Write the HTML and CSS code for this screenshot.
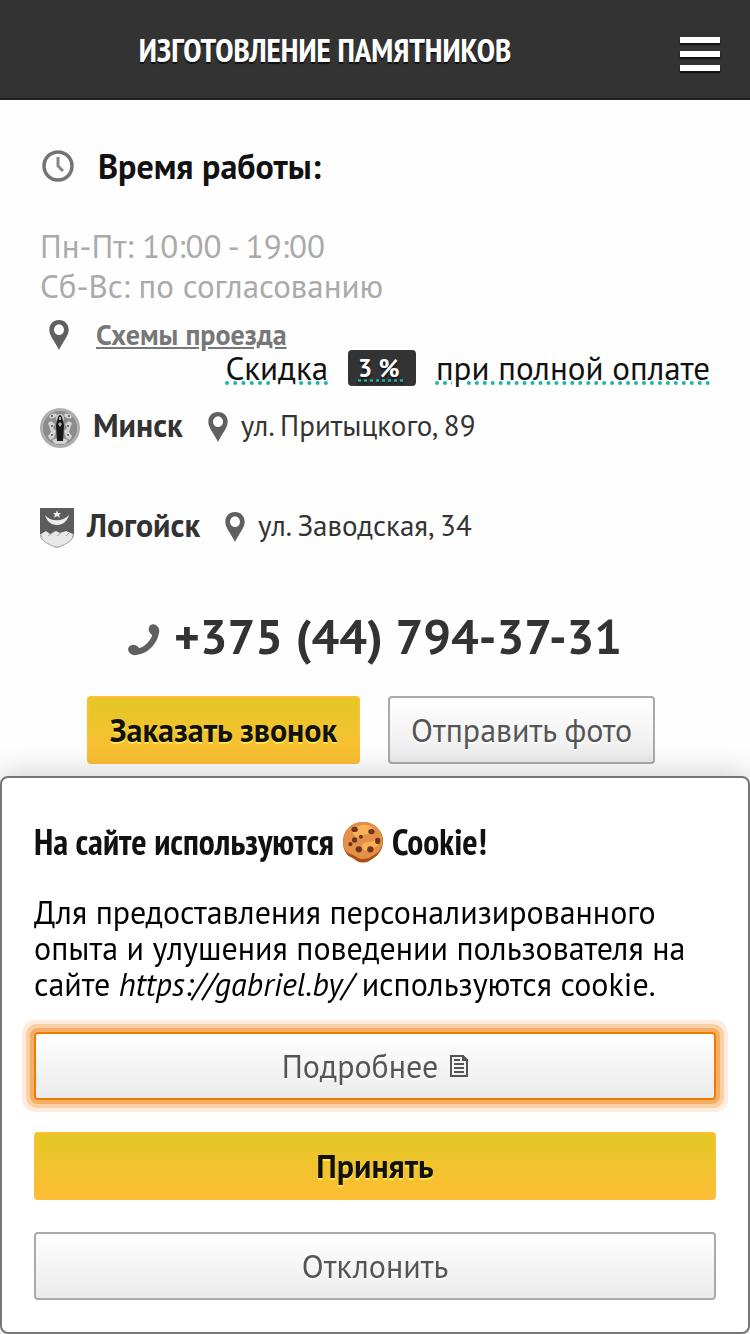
FILE: index.html
```html
<!DOCTYPE html>
<html lang="ru">
<head>
  <meta charset="utf-8">
  <meta name="viewport" content="width=device-width, initial-scale=1">
  <title>Изготовление памятников</title>
  <link rel="stylesheet" href="styles.css">
</head>
<body>
  <svg class="sprite" aria-hidden="true">
    <symbol id="pin" viewBox="0 0 20 31">
      <path fill="#606060" fill-rule="evenodd" d="M10 0C4 0 0 4.300 0 10c0 7 6 12 10 21 4-9 10-14 10-21C20 4.300 16 0 10 0zm0 4.500a5.200 5.500 0 1 1 0 11 5.200 5.500 0 0 1 0-11z"/>
    </symbol>
  </svg>

  <header class="header">
    <h1 class="header-title">ИЗГОТОВЛЕНИЕ ПАМЯТНИКОВ</h1>
    <button type="button" class="menu-btn" aria-label="Меню">
      <span></span>
      <span></span>
      <span></span>
    </button>
  </header>

  <main class="contacts">
    <h2 class="hours-title">
      <svg class="clock" viewBox="0 0 32 32" fill="none" stroke="#747474" aria-hidden="true">
        <circle cx="16" cy="16" r="14" stroke-width="3.500"/>
        <path d="M16 7v9l5 5" stroke="#858585" stroke-width="3"/>
      </svg>
      Время работы:
    </h2>
    <p class="hours">Пн-Пт: 10:00 - 19:00<br>Сб-Вс: по согласованию</p>

    <div class="route">
      <svg class="pin" aria-hidden="true"><use href="#pin"/></svg>
      <a href="#map">Схемы проезда</a>
    </div>

    <p class="discount">
      <span class="dotted">Скидка</span>
      <strong class="badge"><span>3 %&nbsp;</span></strong>
      <span class="dotted">при полной оплате</span>
    </p>

    <div class="city">
      <svg class="emblem" viewBox="0 0 40 40" aria-hidden="true">
        <circle cx="20" cy="20" r="20" fill="#b0b0b0"/>
        <circle cx="20" cy="20" r="17" fill="#8c8c8c"/>
        <g fill="#d2d2d2">
          <ellipse cx="13" cy="8" rx="4" ry="2" transform="rotate(-20 13 8)"/>
          <ellipse cx="28" cy="8" rx="4" ry="2" transform="rotate(20 28 8)"/>
          <path d="M8 15l3-2 4 3-2 4 3 3-2 7-4 2-2-4 3-4zM32 15l-3-2-4 3 2 4-3 3 2 7 4 2 2-4-3-4z"/>
          <path d="M12 32q8-4 16 0l-3 4H15z"/>
        </g>
        <g fill="#555">
          <circle cx="12" cy="8" r="1"/>
          <circle cx="29" cy="8" r="1"/>
          <circle cx="12" cy="18" r="1"/>
          <circle cx="28" cy="18" r="1"/>
          <circle cx="12" cy="27" r="1"/>
          <circle cx="28" cy="27" r="1"/>
        </g>
        <circle cx="20" cy="10" r="4" fill="#c8c8c8"/>
        <path d="M18 9q2-4 4 0l2 8-1 16h-6l-1-16z" fill="#161616"/>
        <path d="M19 9h2v3h-2zM18 16l2-2 2 2-2 3z" fill="#aaa"/>
      </svg>
      <strong class="city-name">Минск</strong>
      <svg class="pin" aria-hidden="true"><use href="#pin"/></svg>
      <span class="address">ул. Притыцкого, 89</span>
    </div>

    <div class="city">
      <svg class="shield" viewBox="0 0 34 40" aria-hidden="true">
        <path d="M0 0h34v26c0 7-9 11-17 14C9 37 0 33 0 26z" fill="#5c5c5c"/>
        <path d="M1 26l5-3 4 3 6-3 4 2 6-2 7 3c0 7-8 11-16 13C9 37 1 33 1 26z" fill="#e8e8e8"/>
        <path d="M8 28l6-4M17 28l5-4M26 28l3-3" stroke="#aaa" fill="none"/>
        <path d="M5 7c5 7 18 7 24 0-2 7-7 10-12 10S7 14 5 7z" fill="#eee"/>
        <path d="M17 2l1 3h3l-2 2 1 3-3-2-3 2 1-3-2-2h3z" fill="#eee"/>
        <path d="M.5 26c0 7 9 11 16.500 13.500C24.500 37 33.500 33 33.500 26" fill="none" stroke="#bbb"/>
      </svg>
      <strong class="city-name">Логойск</strong>
      <svg class="pin" aria-hidden="true"><use href="#pin"/></svg>
      <span class="address">ул. Заводская, 34</span>
    </div>

    <a class="phone" href="tel:+375447943731">
      <svg class="handset" viewBox="0 0 32 32" aria-hidden="true">
        <path d="M28 6C28 17 18 28 6 28" fill="none" stroke="#606060" stroke-width="6"/>
        <ellipse cx="26" cy="6" rx="6" ry="5" fill="#606060" transform="rotate(60 26 6)"/>
        <ellipse cx="6" cy="26" rx="6" ry="5" fill="#606060" transform="rotate(20 6 26)"/>
      </svg>
      +375 (44) 794-37-31
    </a>

    <div class="actions">
      <button type="button" class="btn btn-primary">Заказать звонок</button>
      <button type="button" class="btn">Отправить фото</button>
    </div>
  </main>

  <section class="cookie" role="dialog" aria-labelledby="cookie-title">
    <h2 class="cookie-title" id="cookie-title">
      На сайте используются
      <svg class="cookie-icon" viewBox="0 0 40 40" aria-hidden="true">
        <path d="M20 1C9 1 1 9 1 20c0 6 2 10 5 13 3 2 5 2 8 5 4 2 8 2 12 0 3-2 7-4 9-7 5-6 5-15 2-20C34 5 28 1 20 1z" fill="#ad500d"/>
        <path d="M20 1C9 1 1 9 1 20c0 5 2 9 6 11 3 1 5 2 8 4 4 2 8 1 11 0 3-2 7-4 9-6 5-6 4-13 2-18C34 5 28 1 20 1z" fill="#e39148"/>
        <path d="M10 10C16 1 28 3 30 8c0 6-7 3-10 6-4 4-8 2-10-4zM19 24c1-5 7-3 11-5 4-3 7 2 3 5-5 4-13 7-14 0z" fill="#fdbb58" opacity=".8"/>
        <g fill="#713321">
          <ellipse cx="12" cy="8" rx="3" ry="2.500"/>
          <ellipse cx="28" cy="10" rx="3" ry="2.500"/>
          <circle cx="18" cy="15" r="2"/>
          <circle cx="12" cy="18" r="2.500"/>
          <circle cx="8" cy="22" r="2"/>
          <ellipse cx="34" cy="19" rx="2.500" ry="3"/>
          <circle cx="16" cy="27" r="3"/>
          <circle cx="27" cy="27" r="3"/>
        </g>
      </svg>
      Cookie!
    </h2>
    <p class="cookie-text">Для предоставления персонализированного опыта и улушения поведении пользователя на сайте <em>https://gabriel.by/</em> используются cookie.</p>
    <div class="cookie-actions">
      <button type="button" class="btn btn-focus">
        Подробнее
        <svg class="doc" viewBox="0 0 18 22" fill="none" stroke="#555" stroke-width="2" aria-hidden="true">
          <path d="M1 1h12v4h4v16H1zM13 1l4 4M4 5h6M4 9h10M4 13h10M4 17h10"/>
        </svg>
      </button>
      <button type="button" class="btn btn-primary">Принять</button>
      <button type="button" class="btn">Отклонить</button>
    </div>
  </section>
</body>
</html>
```
FILE: styles.css
```css
* {
  box-sizing: border-box;
}

body {
  margin: 0;
  background-color: #fefefe;
  color: #111;
  font-family: "PT Sans", "Noto Sans", sans-serif;
  font-size: 32px;
}

h1, h2, p {
  margin: 0;
}

svg {
  flex-shrink: 0;
}

.sprite {
  display: none;
}

/* Header */
.header {
  display: flex;
  align-items: center;
  height: 100px;
  padding: 2px 30px 0;
  background-color: #333;
  border-bottom: 2px solid #222;
}

.header-title {
  flex: 1;
  padding-right: 60px;
  text-align: center;
  color: #fff;
  font-family: "PT Sans Narrow", "Liberation Sans Narrow", "Noto Sans", sans-serif;
  font-size: 33px;
  line-height: 40px;
  text-shadow: 0 2px 1px #111;
}

.menu-btn {
  display: flex;
  flex-direction: column;
  gap: 8px;
  width: 40px;
  padding: 8px 0 0;
  border: none;
  background: none;
}

.menu-btn span {
  height: 6px;
  background-color: #fff;
  box-shadow: 0 2px 1px #111;
}

/* Contacts */
.contacts {
  padding: 46px 40px;
}

.hours-title {
  display: flex;
  align-items: center;
  gap: 24px;
  padding-left: 2px;
  font-size: 34px;
  line-height: 40px;
}

.clock {
  width: 32px;
  height: 32px;
}

.hours {
  margin-top: 40px;
  color: #aaa;
  font-size: 33px;
  line-height: 40px;
}

.pin {
  width: 20px;
  height: 30px;
}

.route {
  display: flex;
  align-items: center;
  gap: 27px;
  margin-top: 14px;
  padding-left: 9px;
  line-height: 30px;
}

.route a {
  color: #777;
  font-size: 28px;
  font-weight: bold;
}

.discount {
  display: flex;
  justify-content: flex-end;
  gap: 20px;
  font-size: 33px;
  line-height: 36px;
}

.dotted {
  text-decoration: underline dotted 4px #20b2aa;
  text-underline-offset: 1px;
}

.badge {
  padding: 0 10px;
  border-radius: 4px;
  background-color: #333;
  color: #fff;
  font-size: 25px;
  text-shadow: 0 2px 2px #111;
}

.badge span {
  text-decoration: underline dotted #20b2aa;
}

.city {
  display: flex;
  margin-top: 60px;
  color: #333;
  line-height: 34px;
}

.discount + .city {
  margin-top: 22px;
}

.city .pin {
  margin-top: 4px;
}

.emblem {
  width: 40px;
  height: 40px;
}

.shield {
  width: 34px;
  height: 40px;
}

.city-name {
  margin: 0 25px 0 13px;
}

.address {
  margin-left: 13px;
  font-size: 29px;
}

.phone {
  display: flex;
  justify-content: center;
  align-items: center;
  gap: 14px;
  margin-top: 60px;
  color: #333;
  font-size: 49px;
  font-weight: bold;
  line-height: 56px;
  text-decoration: none;
}

.handset {
  width: 32px;
  height: 32px;
  margin-top: 8px;
}

.actions {
  display: flex;
  justify-content: center;
  gap: 28px;
  margin-top: 32px;
  padding-right: 8px;
}

.actions .btn {
  padding: 12px 21px;
}

.btn {
  display: flex;
  justify-content: center;
  align-items: center;
  gap: 12px;
  padding: 12px 20px;
  border: 2px solid #aaa;
  border-radius: 4px;
  background: linear-gradient(#fff, #ebebeb);
  color: #555;
  font-family: inherit;
  font-size: 32px;
  line-height: 40px;
  text-shadow: 0 2px 0 #fff;
  cursor: pointer;
}

.btn-primary {
  border-color: #fdbe35;
  background: linear-gradient(#e4c825, #fdbe35);
  color: #111;
  font-weight: bold;
  text-shadow: 0 2px 0 #ffe44d;
}

.btn-focus {
  border-color: #ef7c00;
  box-shadow: 0 0 0 4px #f5ae66, 0 0 0 8px #f9cfa3, 0 0 0 12px #feeddf;
}

/* Cookie notice */
.cookie {
  position: fixed;
  right: 0;
  bottom: 0;
  left: 0;
  padding: 40px 32px 32px;
  border: 2px solid #767676;
  border-radius: 8px;
  background-color: #fff;
  box-shadow: 0 0 32px rgba(0, 0, 0, 0.22);
}

.cookie-title {
  display: flex;
  align-items: center;
  gap: 8px;
  font-family: "PT Sans Narrow", "Liberation Sans Narrow", "Noto Sans", sans-serif;
  font-size: 36px;
  line-height: 48px;
}

.cookie-icon {
  width: 42px;
  height: 42px;
}

.cookie-text {
  margin-top: 28px;
  color: #000;
  line-height: 36px;
}

.cookie-actions {
  display: flex;
  flex-direction: column;
  gap: 32px;
  margin-top: 30px;
}

.doc {
  width: 18px;
  height: 22px;
}
```
